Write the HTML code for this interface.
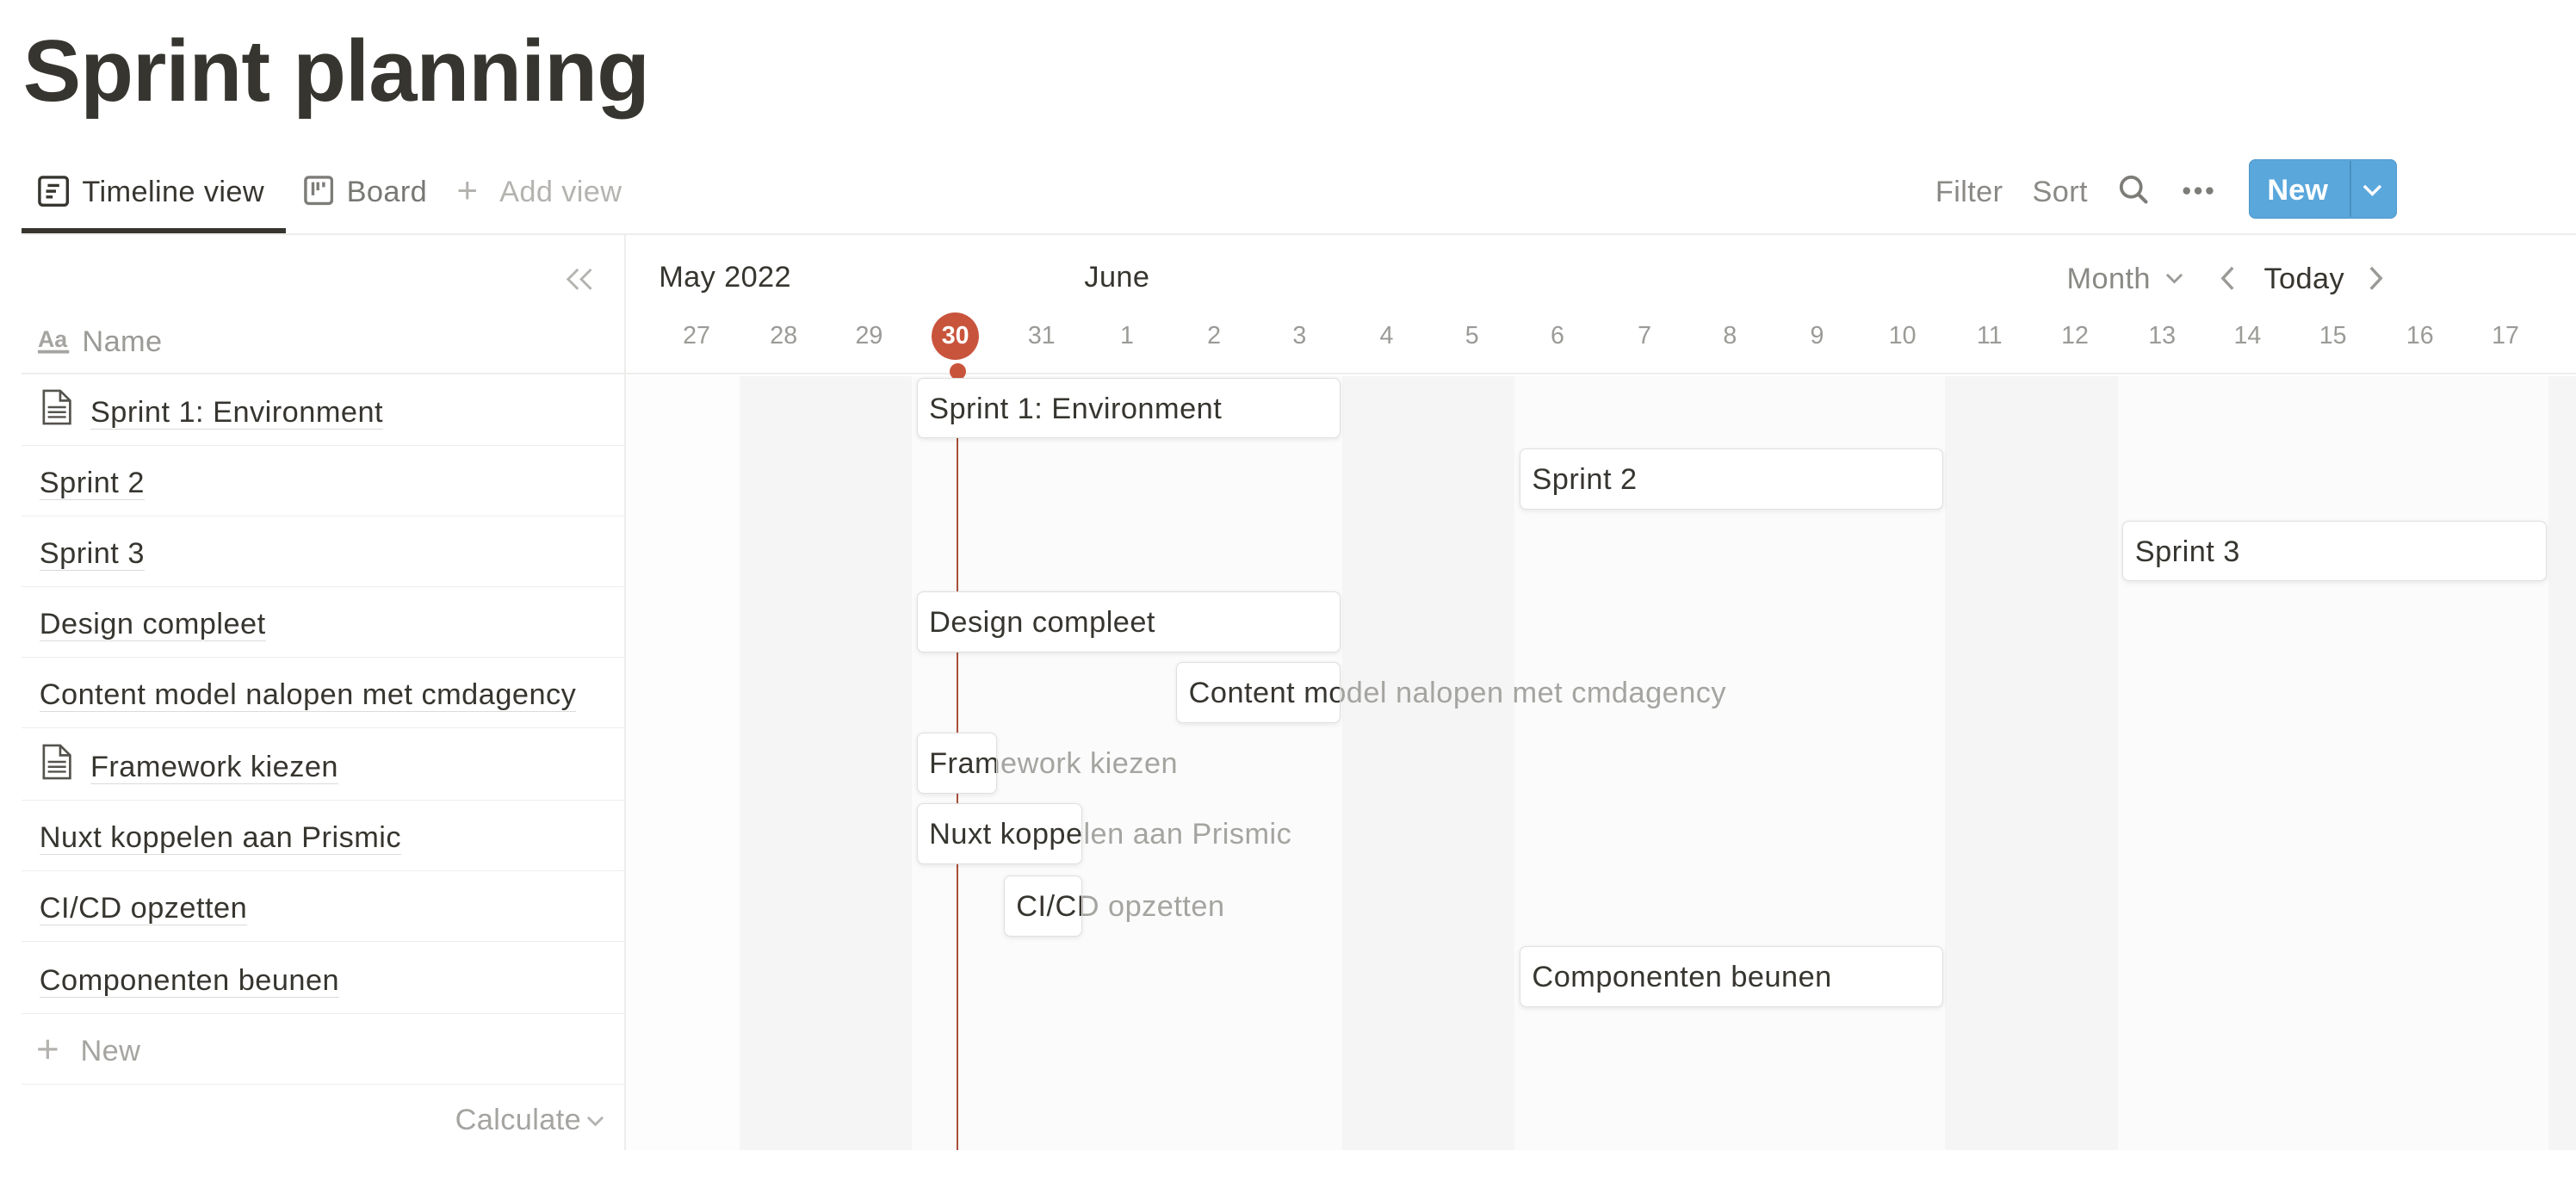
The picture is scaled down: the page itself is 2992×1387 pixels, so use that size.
<!DOCTYPE html>
<html><head><meta charset="utf-8"><style>
html,body{margin:0;padding:0;background:#fff;overflow:hidden}
body{width:2992px;height:1387px}
#r{zoom:1.9082;position:relative;width:1568px;height:727px;font-family:"Liberation Sans",sans-serif;color:#37352f}
.a{position:absolute;white-space:nowrap}
.t{font-size:18px;letter-spacing:0.2px}
.row{position:absolute;left:13px;width:368px;height:43px;border-bottom:1px solid #ededec}
.nm{position:absolute;left:11px;top:13px;font-size:18px;letter-spacing:0.25px;border-bottom:1px solid rgba(55,53,47,.18);line-height:20px}
.bar{position:absolute;height:37px;background:#fff;border:1px solid #dfdfde;border-radius:4px;box-shadow:0 1px 3px rgba(15,15,15,.08);box-sizing:border-box;font-size:18px;letter-spacing:0.25px;line-height:37px;padding-left:7px;white-space:nowrap;overflow:visible}
.ov{position:absolute;white-space:nowrap;font-size:18px;letter-spacing:0.25px;color:#a5a4a1}
.day{position:absolute;top:196px;width:52px;text-align:center;font-size:15px;color:#9b9a97}
</style></head><body><div id="r">
<div class="a" style="left:14px;top:13px;font-size:53px;font-weight:bold;letter-spacing:-0.5px">Sprint planning</div>

<!-- tabs -->
<svg class="a" style="left:23px;top:107px" width="19" height="19" viewBox="0 0 19 19"><rect x="1" y="1" width="17" height="17" rx="2" fill="none" stroke="#37352f" stroke-width="1.8"/><path d="M6 6h7M5 9.5h6M5 13h4" stroke="#37352f" stroke-width="1.8"/></svg>
<div class="a t" style="left:50px;top:107px">Timeline view</div>
<div class="a" style="left:13px;top:139px;width:161px;height:3px;background:#37352f"></div>
<svg class="a" style="left:185px;top:107px" width="18" height="18" viewBox="0 0 18 18"><rect x="1" y="1" width="16" height="16" rx="2" fill="none" stroke="#7d7c78" stroke-width="1.8"/><path d="M5.5 4v8M8.5 4v5M12 4v3" stroke="#7d7c78" stroke-width="1.8"/></svg>
<div class="a t" style="left:211px;top:107px;color:#787774">Board</div>
<div class="a" style="left:278px;top:103px;font-size:22px;color:#b4b3b0">+</div>
<div class="a t" style="left:304px;top:107px;color:#b4b3b0">Add view</div>
<div class="a t" style="left:1178px;top:107px;color:#8a8985">Filter</div>
<div class="a t" style="left:1237px;top:107px;color:#8a8985">Sort</div>
<svg class="a" style="left:1289px;top:106px" width="19" height="19" viewBox="0 0 19 19"><circle cx="8" cy="8" r="6" fill="none" stroke="#7d7c78" stroke-width="2"/><path d="M12.5 12.5L17 17" stroke="#7d7c78" stroke-width="2.2" stroke-linecap="round"/></svg>
<svg class="a" style="left:1328px;top:112px" width="20" height="8"><circle cx="3" cy="4" r="2.2" fill="#7d7c78"/><circle cx="10" cy="4" r="2.2" fill="#7d7c78"/><circle cx="17" cy="4" r="2.2" fill="#7d7c78"/></svg>
<div class="a" style="left:1369px;top:97px;width:90px;height:36px;background:#5aa7dc;border-radius:4px;border:1px solid #4d97cb;box-sizing:border-box"></div>
<div class="a" style="left:1430px;top:98px;width:1px;height:34px;background:#4a8fc0"></div>
<div class="a" style="left:1380px;top:106px;font-size:18px;font-weight:bold;color:#fff">New</div>
<svg class="a" style="left:1438px;top:112px" width="12" height="8"><path d="M1 1l5 5 5-5" fill="none" stroke="#fff" stroke-width="1.8"/></svg>

<div class="a" style="left:13px;top:142px;width:1555px;height:1px;background:#ededec"></div>
<div class="a" style="left:380px;top:143px;width:1px;height:557px;background:#ededec"></div>

<!-- grid background -->
<div class="a" style="left:381px;top:229px;width:1187px;height:471px;background:#fbfbfb"></div>
<div class="a" style="left:381px;top:229px;width:69px;height:471px;background:#fdfdfd"></div>
<div class="a" style="left:450px;top:229px;width:105px;height:471px;background:#f5f5f5"></div>
<div class="a" style="left:817px;top:229px;width:105px;height:471px;background:#f5f5f5"></div>
<div class="a" style="left:1184px;top:229px;width:105px;height:471px;background:#f5f5f5"></div>
<div class="a" style="left:1551px;top:229px;width:17px;height:471px;background:#f5f5f5"></div>
<div class="a" style="left:381px;top:227px;width:1187px;height:1px;background:#ededec"></div>

<!-- header -->
<div class="a t" style="left:401px;top:159px">May 2022</div>
<div class="a t" style="left:660px;top:159px">June</div>
<div class="a t" style="left:1258px;top:160px;color:#8a8985">Month</div>
<svg class="a" style="left:1318px;top:166px" width="11" height="7"><path d="M1 1l4.5 4.5L10 1" fill="none" stroke="#9b9a97" stroke-width="1.5"/></svg>
<svg class="a" style="left:1351px;top:162px" width="10" height="15"><path d="M8 1L2 7.5 8 14" fill="none" stroke="#9b9a97" stroke-width="1.8"/></svg>
<div class="a t" style="left:1378px;top:160px">Today</div>
<svg class="a" style="left:1441px;top:162px" width="10" height="15"><path d="M2 1l6 6.5L2 14" fill="none" stroke="#9b9a97" stroke-width="1.8"/></svg>

<div class="day" style="left:398px">27</div><div class="day" style="left:451px">28</div><div class="day" style="left:503px">29</div>
<div class="a" style="left:567px;top:190px;width:29px;height:29px;border-radius:50%;background:#c9543c;color:#fff;font-weight:bold;font-size:15px;text-align:center;line-height:29px">30</div>
<div class="day" style="left:608px">31</div><div class="day" style="left:660px">1</div><div class="day" style="left:713px">2</div><div class="day" style="left:765px">3</div><div class="day" style="left:818px">4</div><div class="day" style="left:870px">5</div><div class="day" style="left:922px">6</div><div class="day" style="left:975px">7</div><div class="day" style="left:1027px">8</div><div class="day" style="left:1080px">9</div><div class="day" style="left:1132px">10</div><div class="day" style="left:1185px">11</div><div class="day" style="left:1237px">12</div><div class="day" style="left:1290px">13</div><div class="day" style="left:1342px">14</div><div class="day" style="left:1394px">15</div><div class="day" style="left:1447px">16</div><div class="day" style="left:1499px">17</div>
<div class="a" style="left:582px;top:222px;width:1.5px;height:478px;background:#a8503c"></div>
<div class="a" style="left:578px;top:221px;width:10px;height:10px;border-radius:50%;background:#c9543c"></div>

<!-- left panel -->
<svg class="a" style="left:344px;top:163px" width="18" height="14"><path d="M8 1L2 7l6 6M16 1l-6 6 6 6" fill="none" stroke="#b4b3b0" stroke-width="1.5"/></svg>
<svg class="a" style="left:23px;top:199px" width="20" height="17"><text x="0" y="12" font-family="Liberation Sans" font-size="14" font-weight="bold" fill="#a5a4a1">Aa</text><rect x="0" y="14" width="19" height="2" fill="#a5a4a1"/></svg>
<div class="a t" style="left:50px;top:198px;color:#9b9a97">Name</div>
<div class="a" style="left:13px;top:227px;width:367px;height:1px;background:#ededec"></div>

<div class="row" style="top:228px"><svg class="a" style="left:12px;top:9px" width="19" height="22" viewBox="0 0 19 22"><path d="M1.5 1h10l6 6v14h-16z M11.5 1v6h6" fill="none" stroke="#55534e" stroke-width="1.4"/><path d="M4 11h11M4 14h11M4 17h11" stroke="#55534e" stroke-width="1.3"/></svg><div class="nm" style="left:42px">Sprint 1: Environment</div></div>
<div class="row" style="top:271px"><div class="nm">Sprint 2</div></div>
<div class="row" style="top:314px"><div class="nm">Sprint 3</div></div>
<div class="row" style="top:357px"><div class="nm">Design compleet</div></div>
<div class="row" style="top:400px"><div class="nm">Content model nalopen met cmdagency</div></div>
<div class="row" style="top:444px"><svg class="a" style="left:12px;top:9px" width="19" height="22" viewBox="0 0 19 22"><path d="M1.5 1h10l6 6v14h-16z M11.5 1v6h6" fill="none" stroke="#55534e" stroke-width="1.4"/><path d="M4 11h11M4 14h11M4 17h11" stroke="#55534e" stroke-width="1.3"/></svg><div class="nm" style="left:42px">Framework kiezen</div></div>
<div class="row" style="top:487px"><div class="nm">Nuxt koppelen aan Prismic</div></div>
<div class="row" style="top:530px"><div class="nm">CI/CD opzetten</div></div>
<div class="row" style="top:574px"><div class="nm">Componenten beunen</div></div>
<div class="row" style="top:617px"><div class="a" style="left:9px;top:8px;font-size:24px;color:#b4b3b0">+</div><div class="a t" style="left:36px;top:13px;color:#a5a4a1">New</div></div>
<div class="a t" style="left:277px;top:672px;color:#a5a4a1">Calculate</div>
<svg class="a" style="left:357px;top:679px" width="11" height="7"><path d="M1 1l4.5 4.5L10 1" fill="none" stroke="#b4b3b0" stroke-width="1.5"/></svg>

<!-- bars -->
<div class="bar" style="left:558px;top:230px;width:258px">Sprint 1: Environment</div>
<div class="bar" style="left:925px;top:273px;width:258px">Sprint 2</div>
<div class="bar" style="left:1292px;top:317px;width:258px">Sprint 3</div>
<div class="bar" style="left:558px;top:360px;width:258px">Design compleet</div>
<div class="ov" style="left:724px;top:412px">Content model nalopen met cmdagency</div>
<div class="bar" style="left:716px;top:403px;width:100px;overflow:hidden">Content model nalopen met cmdagency</div>
<div class="ov" style="left:566px;top:455px">Framework kiezen</div>
<div class="bar" style="left:558px;top:446px;width:49px;overflow:hidden">Framework kiezen</div>
<div class="ov" style="left:566px;top:498px">Nuxt koppelen aan Prismic</div>
<div class="bar" style="left:558px;top:489px;width:101px;overflow:hidden">Nuxt koppelen aan Prismic</div>
<div class="ov" style="left:619px;top:542px">CI/CD opzetten</div>
<div class="bar" style="left:611px;top:533px;width:48px;overflow:hidden">CI/CD opzetten</div>
<div class="bar" style="left:925px;top:576px;width:258px">Componenten beunen</div>
</div></body></html>
